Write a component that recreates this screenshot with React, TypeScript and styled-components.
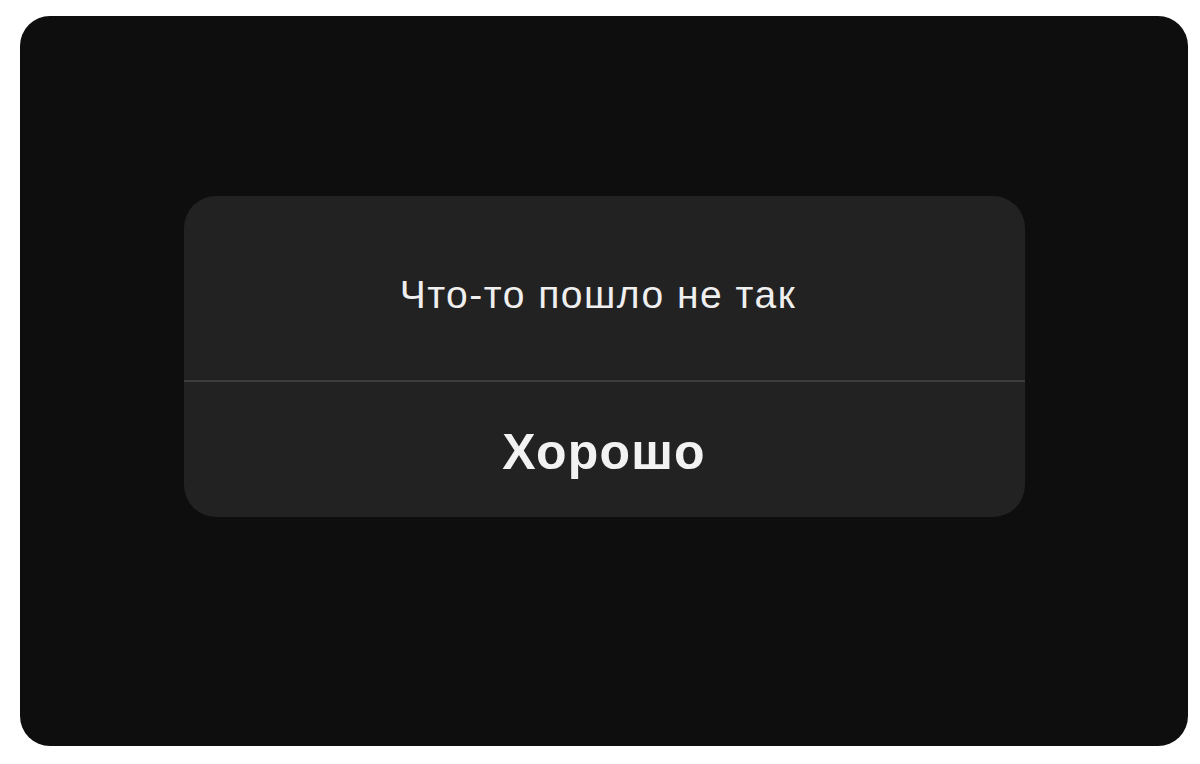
import * as React from 'react';
import styled, { createGlobalStyle } from 'styled-components';

const GlobalStyle = createGlobalStyle`
  html, body {
    margin: 0;
    padding: 0;
    background: #ffffff;
  }
  #root {
    height: 764px;
  }
`;

const Page = styled.div`
  height: 764px;
  padding: 16px 12px 18px 20px;
  box-sizing: border-box;
  display: flex;
`;

const Screen = styled.main`
  flex: 1;
  background: #0e0e0e;
  border-radius: 30px;
  display: flex;
  flex-direction: column;
  align-items: center;
  padding-top: 180px;
`;

const Alert = styled.section`
  width: 841px;
  height: 321px;
  background: #222222;
  border-radius: 32px;
  display: flex;
  flex-direction: column;
  overflow: hidden;
  font-family: 'Liberation Sans', Arial, sans-serif;
`;

const Message = styled.p`
  margin: 0;
  height: 184px;
  display: flex;
  align-items: center;
  justify-content: center;
  padding: 14px 12px 0 0;
  box-sizing: border-box;
  color: #efefef;
  font-size: 39px;
  letter-spacing: 1.5px;
`;

const Divider = styled.hr`
  margin: 0;
  border: none;
  height: 2px;
  background: #3d3d3d;
`;

const Action = styled.button`
  flex: 1;
  border: none;
  background: transparent;
  color: #f2f2f2;
  font-family: inherit;
  font-size: 50px;
  font-weight: 700;
  letter-spacing: 1.2px;
  padding: 4px 0 0;
  cursor: pointer;
`;

const App: React.FunctionComponent = () => {
  return (
    <>
      <GlobalStyle />
      <Page>
        <Screen>
          <Alert role="alertdialog">
            <Message>Что-то пошло не так</Message>
            <Divider />
            <Action>Хорошо</Action>
          </Alert>
        </Screen>
      </Page>
    </>
  );
};

export default App;
